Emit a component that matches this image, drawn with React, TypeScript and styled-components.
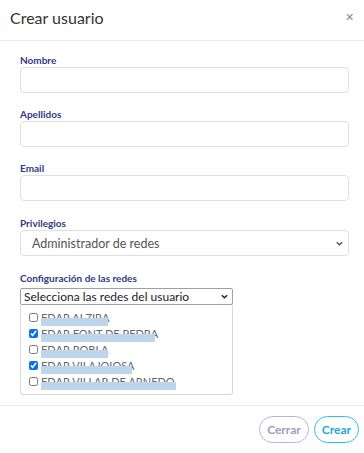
import React from "react";
import styled, { createGlobalStyle } from "styled-components";

const Global = createGlobalStyle`
  html, body { margin: 0; padding: 0; background: #fff; }
  body { font-family: "Lato", "Open Sans", sans-serif; }
  * { box-sizing: border-box; }
`;

const Modal = styled.div`
  width: 364px;
  height: 453px;
  background: #fff;
  display: flex;
  flex-direction: column;
`;

const Header = styled.div`
  height: 41px;
  display: flex;
  align-items: center;
  justify-content: space-between;
  padding: 0 6px 0 10px;
  border-bottom: 1px solid #e9ecef;
`;

const Title = styled.h5`
  margin: 0;
  font-size: 16px;
  font-weight: 400;
  color: #333;
  padding-bottom: 5px;
`;

const Close = styled.span`
  font-family: "DejaVu Sans", sans-serif;
  font-size: 11px;
  font-weight: 300;
  color: #888;
  line-height: 1;
  padding: 0 4px 6px 0;
`;

const Body = styled.div`
  flex: 1;
  padding: 12px 15px 0 20px;
  border-bottom: 1px solid #e9ecef;
`;

const Group = styled.div<{ $mb?: number }>`
  display: flex;
  flex-direction: column;
  margin-bottom: ${(p) => p.$mb ?? 14}px;
`;

const Label = styled.label`
  font-size: 10px;
  font-weight: 700;
  color: #2f3a85;
  line-height: 14px;
`;

const Input = styled.div`
  height: 26px;
  border: 1px solid #dcdfe6;
  border-radius: 4px;
  background: #fff;
`;

const SelectBox = styled.div`
  height: 26px;
  border: 1px solid #dcdfe6;
  border-radius: 4px;
  display: flex;
  align-items: center;
  justify-content: space-between;
  padding: 0 4px 0 11px;
  font-size: 12.5px;
  color: #555;
`;

const NativeSelect = styled.div`
  margin-top: 3px;
  width: 213px;
  height: 17px;
  border: 1px solid #a0a0a0;
  border-radius: 2px;
  display: flex;
  align-items: center;
  justify-content: space-between;
  padding: 0 3px 0 3px;
  font-size: 12px;
  color: #222;
`;

const ListBox = styled.div`
  width: 213px;
  height: 90px;
  border: 1px solid #d8d8d8;
  border-top: none;
  border-radius: 0 0 3px 3px;
  padding: 4px 0 0 8px;
  display: flex;
  flex-direction: column;
`;

const Item = styled.div`
  height: 16px;
  display: flex;
  align-items: center;
  gap: 3px;
`;

const Check = styled.input`
  width: 9px;
  height: 9px;
  margin: 0;
  accent-color: #0b72ef;
`;

const ItemText = styled.span<{ $w: number }>`
  position: relative;
  font-size: 11px;
  color: #666;
  white-space: nowrap;
  &::after {
    content: "";
    position: absolute;
    left: 0;
    top: 7px;
    width: ${(p) => p.$w}px;
    height: 8px;
    background: #bdd6ee;
  }
`;

const Footer = styled.div`
  height: 47px;
  display: flex;
  align-items: center;
  justify-content: flex-end;
  gap: 5px;
  padding: 0 5px 1px 0;
`;

const Pill = styled.button<{ $primary?: boolean }>`
  height: 27px;
  border-radius: 14px;
  background: #fff;
  padding: 0 7px;
  font-family: inherit;
  font-size: 12px;
  font-weight: 700;
  border: 1.5px solid ${(p) => (p.$primary ? "#25c4ea" : "#b6b8d3")};
  color: ${(p) => (p.$primary ? "#1aa9dc" : "#9c9fbc")};
`;

const Chevron = ({ size = 8, color = "#444" }: { size?: number; color?: string }) => (
  <svg width={size} height={size} viewBox="0 0 10 10">
    <path d="M2 3.5 L5 6.5 L8 3.5" fill="none" stroke={color} strokeWidth="1.6" />
  </svg>
);

const redes = [
  { name: "EDAR ALZIRA", checked: false, w: 67 },
  { name: "EDAR FONT DE PEDRA", checked: true, w: 114 },
  { name: "EDAR ROBLA", checked: false, w: 67 },
  { name: "EDAR VILAJOIOSA", checked: true, w: 91 },
  { name: "EDAR VILLAR DE ARNEDO", checked: false, w: 135 },
];

export default function App() {
  return (
    <Modal>
      <Global />
      <Header>
        <Title>Crear usuario</Title>
        <Close>✕</Close>
      </Header>
      <Body>
        <Group>
          <Label>Nombre</Label>
          <Input />
        </Group>
        <Group>
          <Label>Apellidos</Label>
          <Input />
        </Group>
        <Group $mb={15}>
          <Label>Email</Label>
          <Input />
        </Group>
        <Group $mb={15}>
          <Label>Privilegios</Label>
          <SelectBox>
            Administrador de redes
            <Chevron size={9} color="#555" />
          </SelectBox>
        </Group>
        <Group $mb={0}>
          <Label>Configuración de las redes</Label>
          <NativeSelect>
            Selecciona las redes del usuario
            <Chevron size={9} color="#222" />
          </NativeSelect>
          <ListBox>
            {redes.map((r) => (
              <Item key={r.name}>
                <Check type="checkbox" defaultChecked={r.checked} />
                <ItemText $w={r.w}>{r.name}</ItemText>
              </Item>
            ))}
          </ListBox>
        </Group>
      </Body>
      <Footer>
        <Pill>Cerrar</Pill>
        <Pill $primary>Crear</Pill>
      </Footer>
    </Modal>
  );
}
